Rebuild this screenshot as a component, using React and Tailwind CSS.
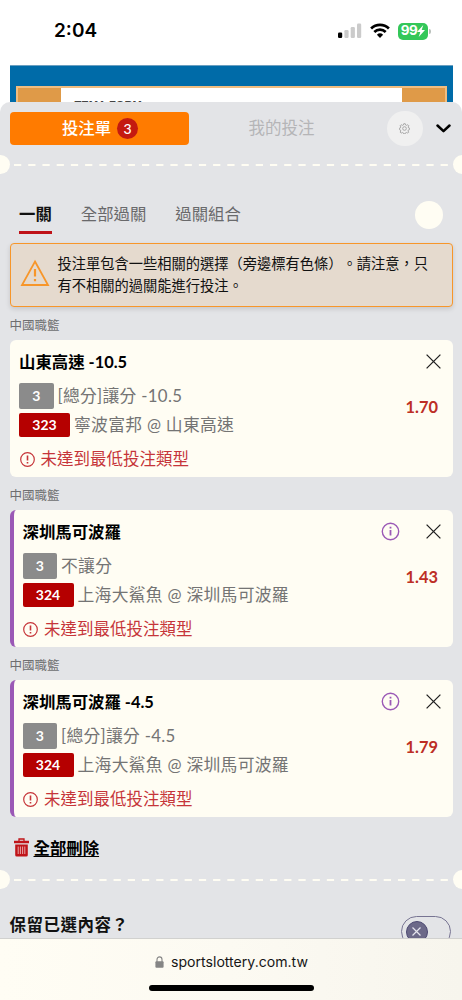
import React from "react";

const bets = [
  { title: "山東高速 -10.5", no: "3", type: "[總分]讓分 -10.5", id: "323", match: "寧波富邦 @ 山東高速", odds: "1.70", related: false },
  { title: "深圳馬可波羅", no: "3", type: "不讓分", id: "324", match: "上海大鯊魚 @ 深圳馬可波羅", odds: "1.43", related: true },
  { title: "深圳馬可波羅 -4.5", no: "3", type: "[總分]讓分 -4.5", id: "324", match: "上海大鯊魚 @ 深圳馬可波羅", odds: "1.79", related: true },
];

function StatusBar() {
  return (
    <div className="flex h-[65px] shrink-0 items-start pl-[54px] pr-[31px] pt-[19px] font-['Inter',sans-serif]">
      <div className="flex-1 text-[19px] font-semibold leading-6 text-black">2:04</div>
      <div className="flex h-6 items-center">
        <svg width="24" height="16" viewBox="0 0 24 16">
          <rect x="0" y="9.5" width="4.2" height="5.5" rx="1.2" fill="#000" />
          <rect x="6.4" y="7" width="4.2" height="8" rx="1.2" fill="#cbcbcb" />
          <rect x="12.7" y="4" width="4.2" height="11" rx="1.2" fill="#cbcbcb" />
          <rect x="19" y="0.5" width="4.2" height="14.5" rx="1.2" fill="#cbcbcb" />
        </svg>
        <svg className="ml-2" width="20" height="16" viewBox="0 0 20 16" fill="none" stroke="#000" strokeWidth="2.7">
          <path d="M1.1 5.4a13 13 0 0 1 17.8 0" />
          <path d="M4.3 9a8.2 8.2 0 0 1 11.4 0" />
          <path d="M10 14.9 6.9 11.7a4.5 4.5 0 0 1 6.2 0z" fill="#000" stroke="none" />
        </svg>
        <div className="ml-[8.5px] flex h-[17px] w-[30px] items-center justify-center rounded-[5px] bg-[#34c759] text-[13.5px] font-bold leading-none tracking-[-0.4px] text-white">
          99
          <svg width="8" height="12" viewBox="0 0 8 12">
            <path d="M6.3 0 0 6.9h3.3L1.700 12 8 5.100H4.700z" fill="#fff" />
          </svg>
        </div>
        <div className="ml-px h-[5px] w-[2px] rounded-r-full bg-[#b9c0bb]" />
      </div>
    </div>
  );
}

function Perforation() {
  return (
    <div className="flex h-[19px] shrink-0 items-center justify-between overflow-hidden">
      <div className="-ml-[9.5px] size-[19px] shrink-0 rounded-full bg-[#fffdf3]" />
      <svg className="mt-[1px] shrink-0" width="434" height="2" viewBox="0 0 434 2">
        <path d="M0 1H434" stroke="#fffdf3" strokeWidth="2" strokeDasharray="7.25 6.97" />
      </svg>
      <div className="-mr-[9.5px] size-[19px] shrink-0 rounded-full bg-[#fffdf3]" />
    </div>
  );
}

function Gear() {
  return (
    <svg width="11" height="11" viewBox="0 0 24 24" fill="none" stroke="#a3a3a3" strokeWidth="2">
      <path d="M9.6 4.3 10.4 1.5h3.2l.8 2.8 2.2.9 2.6-1.4 2.2 2.2-1.4 2.6.9 2.2 2.1.4v3.2l-2.4.7-.9 2.2 1.4 2.6-2.2 2.2-2.6-1.4-2.2.9-.7 2.1h-3.2l-.7-2.1-2.2-.9-2.6 1.4-2.2-2.2 1.4-2.6-.9-2.2-2.1-.7v-3.2l2.1-.4.9-2.2-1.4-2.6 2.2-2.2 2.6 1.4z" />
      <circle cx="12" cy="12" r="4" />
    </svg>
  );
}

function BetCard({ bet }) {
  return (
    <section>
      <div className="h-[33px] pt-[10.5px] text-[12.5px] leading-[18px] text-[#6e6e70]">中國職籃</div>
      <div className={`flex h-[137px] overflow-hidden rounded-[6px] bg-[#fffdf3] ${bet.related ? "border-l-4 border-[#9b59b6] pl-[9px]" : "pl-[9.5px]"}`}>
        <div className="flex-1 whitespace-nowrap">
          <div className="mt-[11px] text-[16.4px] font-bold leading-[22px] text-black">{bet.title}</div>
          <div className="mt-[9.5px] flex h-[27px] items-center gap-[4px]">
            <span className="flex h-[26px] w-[34.5px] items-center justify-center rounded-[2px] bg-[#8b8b8b] text-[14px] font-bold text-white">{bet.no}</span>
            <span className="text-[16.8px] leading-6 tracking-[0.3px] text-[#747474]">{bet.type}</span>
          </div>
          <div className="mt-[3.5px] flex h-6 items-center gap-[4px]">
            <span className="flex h-6 w-[51px] items-center justify-center rounded-[2px] bg-[#b50000] text-[14px] font-bold text-white">{bet.id}</span>
            <span className="text-[16.8px] leading-6 tracking-[0.3px] text-[#747474]">{bet.match}</span>
          </div>
          <div className="mt-[10.5px] flex h-6 items-center gap-[6px] pl-[0.5px] text-[#c6353a]">
            <svg width="15" height="15" viewBox="0 0 15 15" fill="none" stroke="currentColor">
              <circle cx="7.5" cy="7.5" r="6.8" strokeWidth="1.2" />
              <path d="M7.5 3.4v5M7.5 9.9v1.7" strokeWidth="1.6" />
            </svg>
            <span className="text-[16.5px] leading-6">未達到最低投注類型</span>
          </div>
        </div>
        <div className="flex w-[90px] flex-col items-end">
          <div className="mr-[12px] mt-[12px] flex h-[19px] items-center gap-[25.5px]">
            {bet.related && (
              <svg width="19" height="19" viewBox="0 0 19 19" fill="none" stroke="#9b59b6">
                <circle cx="9.5" cy="9.5" r="8.2" strokeWidth="1.4" />
                <path d="M9.5 8v5.6M9.5 4.8v1.8" strokeWidth="1.8" />
              </svg>
            )}
            <svg width="15" height="15" viewBox="0 0 15 15" stroke="#242424" strokeWidth="1.3">
              <path d="M.6 .6 14.4 14.4M14.4 .6 .6 14.4" />
            </svg>
          </div>
          <div className="mr-[14.5px] mt-[24px] text-[16.4px] font-bold leading-6 text-[#bd2e25]">{bet.odds}</div>
        </div>
      </div>
    </section>
  );
}

export default function App() {
  return (
    <main className="flex h-[1000px] w-[462px] flex-col overflow-hidden bg-white font-['Lato','Noto_Sans_CJK_TC',sans-serif]">
      <StatusBar />
      <div className="mx-[9.5px] h-[37px] shrink-0 border-t border-[#6a9fc0] bg-[#006ba8] px-[6px] pt-5">
        <div className="-mb-3 flex h-[28px] border-x-2 border-t-2 border-[#f0bd80] bg-[#df9a48]">
          <div className="w-[43px]" />
          <div className="flex-1 overflow-hidden bg-white pl-[14px] pt-[10px] font-['Liberation_Sans',sans-serif] text-[11.2px] font-bold leading-[14px] text-[#444]">TEMA FORM</div>
          <div className="w-[43px]" />
        </div>
      </div>

      <div className="z-10 flex h-[836px] shrink-0 flex-col overflow-hidden rounded-t-[10px] bg-[#e3e4e7]">
        <div className="flex h-[52.5px] shrink-0 items-center pl-[9.5px] pr-[10px]">
          <div className="flex h-[33px] w-[179.5px] items-center justify-center gap-[6px] rounded-[4px] bg-[#ff7b00] pl-[1.5px] text-[16.4px] font-medium text-white">
            投注單
            <span className="flex size-[21px] items-center justify-center rounded-full bg-[#c41a10] text-[14px] font-medium">3</span>
          </div>
          <div className="w-[185px] text-center text-[16.5px] text-[#b5b5b7]">我的投注</div>
          <div className="ml-[13px] flex size-[35.5px] items-center justify-center rounded-full bg-[#f0f0f0]">
            <Gear />
          </div>
          <svg className="ml-auto mr-[1px]" width="15" height="9" viewBox="0 0 15 9" fill="none" stroke="#000" strokeWidth="2.5" strokeLinecap="round" strokeLinejoin="round">
            <path d="M1.5 1.5 7.5 7.2 13.5 1.5" />
          </svg>
        </div>
        <Perforation />

        <div className="mt-[20px] flex h-[42px] shrink-0 items-start pl-[19px] pr-[19.5px] pt-[8px] text-[16.4px] leading-6 text-[#69696b]">
          <div className="h-[32px] border-b-[3.5px] border-[#bf1218] font-bold text-[#111]">一關</div>
          <div className="ml-[29px]">全部過關</div>
          <div className="ml-[29px]">過關組合</div>
          <div className="ml-auto mt-[-1px] size-[28px] rounded-full bg-[#fffdf3]" />
        </div>

        <div className="mx-[9.5px] mt-[7px] flex h-[64.5px] shrink-0 items-center rounded-[4px] border-[1.5px] border-[#f7962a] bg-[#e5dace] pl-[9px] shadow-[0_2px_5px_rgba(0,0,0,0.13)]">
          <svg className="mt-[-3px] shrink-0" width="30" height="28" viewBox="0 0 30 28" fill="none" stroke="#f7962a" strokeWidth="1.8">
            <path d="M15 2.5 28 26H2z" />
            <path d="M15 10v7.5M15 20v2.3" strokeWidth="2.2" />
          </svg>
          <p className="ml-[8px] whitespace-nowrap text-[14.25px] leading-[21.4px] text-[#111] [text-spacing-trim:space-all]">
            投注單包含一些相關的選擇（旁邊標有色條）。請注意，只
            <br />
            有不相關的過關能進行投注。
          </p>
        </div>

        <div className="mx-[9.5px] -mt-[0.5px] shrink-0">
          {bets.map((bet, i) => (
            <BetCard key={i} bet={bet} />
          ))}
        </div>

        <div className="mt-[19px] flex h-6 shrink-0 items-center pl-[14px]">
          <svg width="15" height="19" viewBox="0 0 15 19" fill="none">
            <path d="M5 3V1h5v2" stroke="#c01419" strokeWidth="1.3" />
            <path d="M0 2.8h15v2.4H0zM1.2 6.4h12.6V17q0 1.5-1.5 1.5H2.7Q1.2 18.5 1.2 17z" fill="#c01419" />
            <path d="M4.2 8.5v7.5M6.4 8.5v7.5M8.6 8.5v7.5M10.8 8.5v7.5" stroke="#f0cccd" strokeWidth=".8" />
          </svg>
          <span className="ml-[4.5px] text-[16.4px] font-bold leading-6 text-black underline decoration-[1.3px] underline-offset-2">全部刪除</span>
        </div>
        <div className="mt-[10.5px] shrink-0">
          <Perforation />
        </div>

        <div className="mt-[24px] flex shrink-0 items-start justify-between pl-[9.5px] pr-[11.5px]">
          <span className="text-[16.5px] font-bold leading-6 tracking-[0.5px] text-[#111]">保留已選內容？</span>
          <div className="mt-[3px] flex h-[31px] w-[50px] items-center rounded-full border border-[#777492] pl-[4px]">
            <div className="flex size-[22px] items-center justify-center rounded-full border border-[#4d4a73] bg-[#6c6989]">
              <svg width="9" height="9" viewBox="0 0 9 9" stroke="#e5e5ee" strokeWidth="1.2">
                <path d="M.5 .5 8.5 8.5M8.5 .5 .5 8.5" />
              </svg>
            </div>
          </div>
        </div>
      </div>

      <footer className="z-20 flex h-[62px] shrink-0 flex-col items-center border-t border-[#d1d1cf] bg-gradient-to-r from-[#fffdf4] via-[#fcfaf2] to-[#f7f5ed]">
        <div className="mt-[12px] flex h-[22px] items-center gap-[7px] pl-px font-['Inter',sans-serif] text-[14.1px] leading-[22px] text-[#161616]">
          <svg width="9" height="12" viewBox="0 0 9 12" fill="none">
            <path d="M2 6V3.4a2.5 2.5 0 0 1 5 0V6" stroke="#858585" strokeWidth="1.1" />
            <rect x=".4" y="5.2" width="8.2" height="6.5" rx="1" fill="#858585" />
          </svg>
          sportslottery.com.tw
        </div>
        <div className="mt-[11.5px] h-[6px] w-[165px] rounded-full bg-black" />
      </footer>
    </main>
  );
}
